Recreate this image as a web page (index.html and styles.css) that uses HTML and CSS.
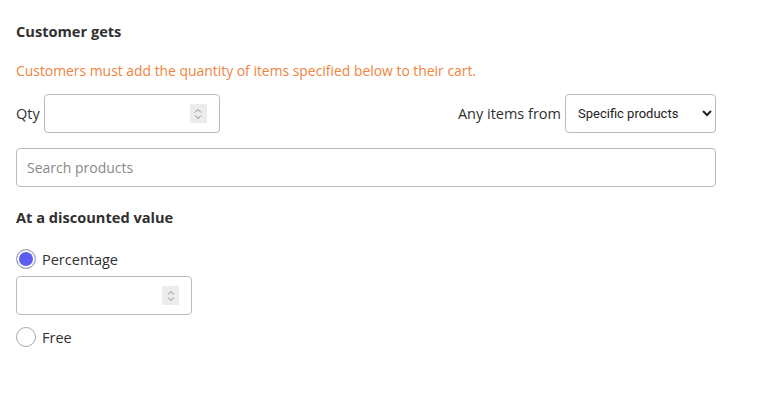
FILE: index.html
```html
<!DOCTYPE html>
<html lang="en">

<head>
    <meta charset="UTF-8">
    <title>Customer gets</title>
    <link rel="stylesheet" href="styles.css">
</head>

<body>
    <div class="section">
        <h2>Customer gets</h2>
        <p class="hint">Customers must add the quantity of items specified below to their cart.</p>

        <div class="row">
            <label class="field">
                <span>Qty</span>
                <span class="num-box qty">
                    <input type="text">
                    <span class="spin">
                        <svg width="8" height="12" viewBox="0 0 8 12"><path d="M1 4.5 4 1.5 7 4.5M1 7.5 4 10.5 7 7.5" fill="none" stroke="#888" stroke-width="1"/></svg>
                    </span>
                </span>
            </label>
            <label class="field">
                <span>Any items from</span>
                <select class="select">
                    <option>Specific products</option>
                    <option>Specific collections</option>
                </select>
            </label>
        </div>

        <input class="search" type="text" placeholder="Search products">

        <h2 class="sub">At a discounted value</h2>

        <label class="radio">
            <input type="radio" name="value" checked>
            <span>Percentage</span>
        </label>
        <span class="num-box pct">
            <input type="text">
            <span class="spin">
                <svg width="8" height="12" viewBox="0 0 8 12"><path d="M1 4.5 4 1.5 7 4.5M1 7.5 4 10.5 7 7.5" fill="none" stroke="#888" stroke-width="1"/></svg>
            </span>
        </span>
        <label class="radio">
            <input type="radio" name="value">
            <span>Free</span>
        </label>
    </div>
</body>

</html>
```

FILE: styles.css
```css
body {
    margin: 0;
    font-family: 'Open Sans', sans-serif;
    color: #303030;
    background: #fff;
}

.section {
    width: 700px;
    padding: 20px 16px;
}

h2 {
    font-size: 14.6px;
    font-weight: 700;
    margin: 0 0 18px;
    line-height: 22px;
}

.hint {
    color: #f0843c;
    font-size: 13.9px;
    margin: 0 0 12px;
    line-height: 22px;
}

.row {
    display: flex;
    justify-content: space-between;
    align-items: center;
}

.field {
    display: flex;
    align-items: center;
    gap: 4px;
    font-size: 14.5px;
}

.num-box {
    display: flex;
    align-items: center;
    height: 39px;
    border: 1px solid #bbb;
    border-radius: 4px;
    box-sizing: border-box;
    padding: 0 12px 0 10px;
}

.num-box input {
    border: none;
    outline: none;
    flex: 1;
    min-width: 0;
    font: inherit;
}

.qty {
    width: 176px;
}

.pct {
    width: 176px;
    margin: 7px 0 12px;
}

.spin {
    display: flex;
    align-items: center;
    justify-content: center;
    width: 17px;
    height: 19px;
    background: #ececec;
}

.select {
    width: 151px;
    height: 39px;
    border: 1px solid #bbb;
    border-radius: 4px;
    padding: 0 8px;
    font-family: Roboto, sans-serif;
    font-size: 13px;
    color: #222;
    background: #fff;
}

.search {
    display: block;
    width: 700px;
    height: 39px;
    box-sizing: border-box;
    margin: 15px 0 19px;
    border: 1px solid #bbb;
    border-radius: 4px;
    padding: 0 10px;
    font-family: 'Open Sans', sans-serif;
    font-size: 14px;
}

.search::placeholder {
    color: #888;
}

.sub {
    margin-bottom: 21px;
}

.radio {
    display: flex;
    align-items: center;
    gap: 6px;
    height: 20px;
    font-size: 14.5px;
}

.radio input {
    appearance: none;
    margin: 0;
    width: 20px;
    height: 20px;
    border: 1px solid #aaa;
    border-radius: 50%;
    background: #fff;
}

.radio input:checked {
    background: #5c5cf0;
    box-shadow: inset 0 0 0 2px #fff;
}
```
